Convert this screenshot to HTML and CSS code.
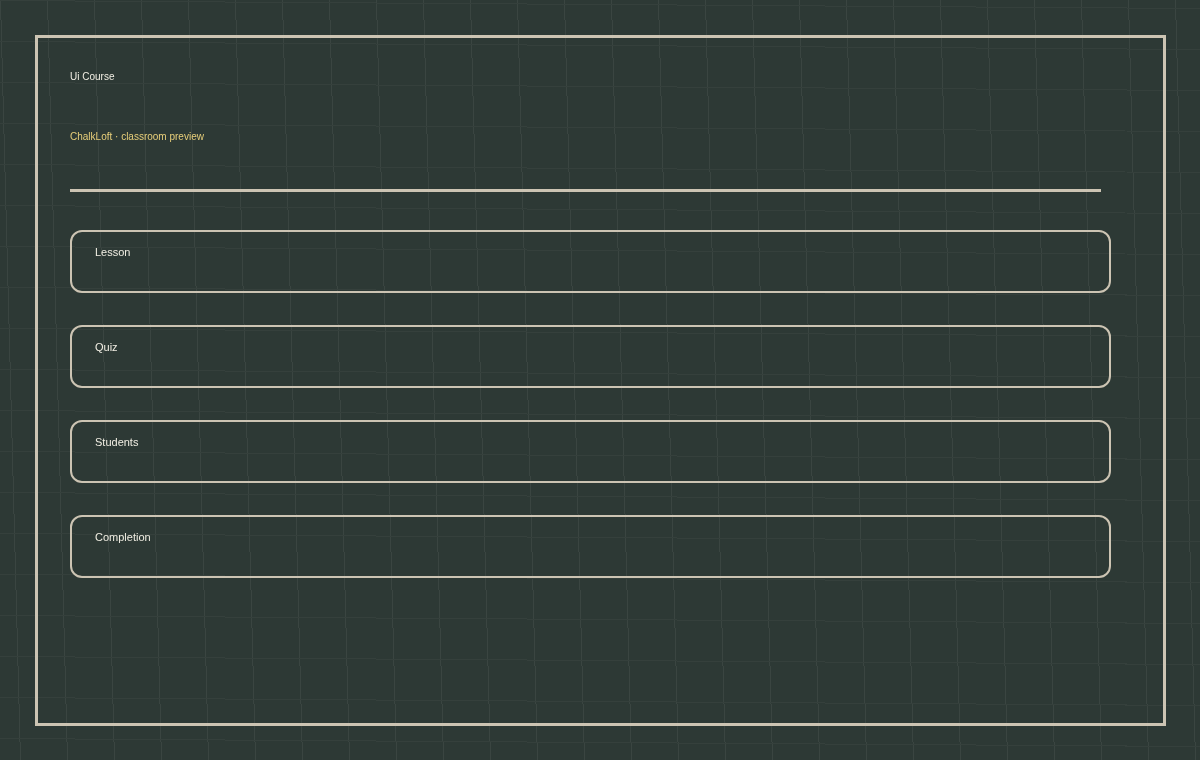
FILE: index.html
```html
<!DOCTYPE html>
<html lang="en">
<head>
<meta charset="utf-8">
<meta name="viewport" content="width=device-width, initial-scale=1">
<title>Ui Course</title>
<link rel="stylesheet" href="styles.css">
</head>
<body>
<svg class="grid" viewBox="0 0 1200 760" preserveAspectRatio="xMinYMin slice" aria-hidden="true">
  <defs>
    <path id="v" d="M0.5 0l20 760m27-760l20 760m27-760l20 760m27-760l20 760m27-760l20 760m27-760l20 760m27-760l20 760m27-760l20 760m27-760l20 760m27-760l20 760m27-760l20 760m27-760l20 760m27-760l20 760"/>
  </defs>
  <use class="grid-column" href="#v"/>
  <use class="grid-column" href="#v" x="611"/>
  <path class="grid-row" d="M0 .5l1200 8m-1200 33l1200 8m-1200 33l1200 8m-1200 33l1200 8m-1200 33l1200 8m-1200 33l1200 8m-1200 33l1200 8m-1200 33l1200 8m-1200 33l1200 8m-1200 33l1200 8m-1200 33l1200 8m-1200 33l1200 8m-1200 33l1200 8m-1200 33l1200 8m-1200 33l1200 8m-1200 33l1200 8m-1200 33l1200 8m-1200 33l1200 8m-1200 33l1200 8"/>
</svg>
<main class="board">
  <header class="heading">
    <h1 class="title">Ui Course</h1>
    <p class="subtitle">ChalkLoft · classroom preview</p>
  </header>
  <hr class="divider">
  <ul class="cards">
    <li class="card">Lesson</li>
    <li class="card">Quiz</li>
    <li class="card">Students</li>
    <li class="card">Completion</li>
  </ul>
</main>
</body>
</html>
```
FILE: styles.css
```css
* { box-sizing: border-box; }
body {
  margin: 0;
  min-height: 100vh;
  display: flex;
  padding: 35px 34px 34px 35px;
  background: #2d3935;
  color: #f1eee3;
  font: 11px/16px "Liberation Sans", Arial, sans-serif;
}
.grid {
  position: fixed;
  inset: 0;
  width: 100%;
  height: 100%;
  z-index: -1;
  fill: none;
  shape-rendering: crispEdges;
}
.grid-column { stroke: #3a4541; }
.grid-row { stroke: #35403c; }
.board {
  flex: 1;
  border: 3px solid #ccc4b3;
  padding: 30px 52px 30px 32px;
}
.heading {
  display: flex;
  flex-direction: column;
  gap: 42px;
}
.title, .subtitle {
  margin: 0;
  font-size: 10px;
  line-height: 18px;
  font-weight: 400;
}
.subtitle { color: #e8cf7a; }
.divider {
  height: 3px;
  margin: 43px 10px 38px 0;
  border: 0;
  background: #ccc4b3;
}
.cards {
  display: grid;
  gap: 32px;
  margin: 0;
  padding: 0;
  list-style: none;
}
.card {
  min-height: 63px;
  padding: 12px 23px;
  border: 2px solid #ccc4b3;
  border-radius: 12px;
}
```
